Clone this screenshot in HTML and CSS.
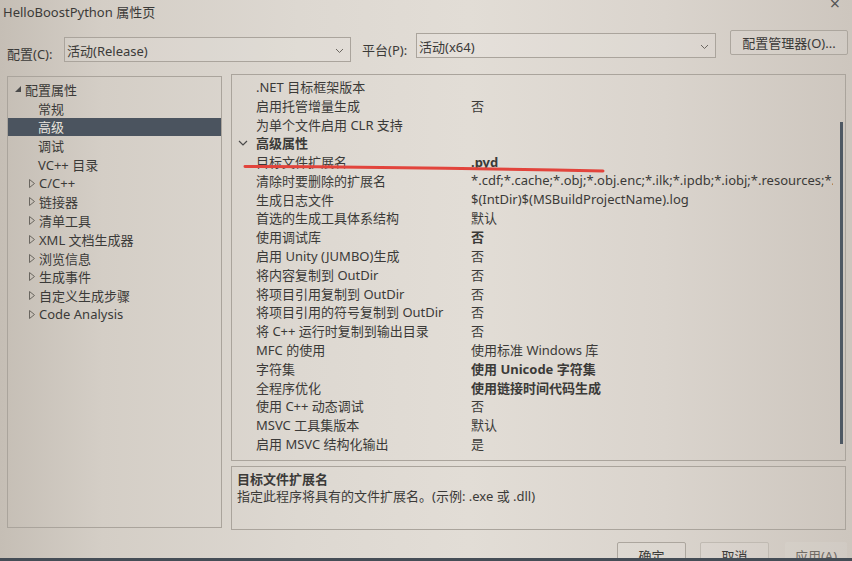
FILE: index.html
```html
<!DOCTYPE html>
<html lang="zh-CN">
<head>
    <meta charset="UTF-8">
    <meta name="viewport" content="width=device-width, initial-scale=1.0">
    <title>HelloBoostPython 属性页</title>
    <link rel="stylesheet" href="styles.css">
</head>
<body>
    <div class="dialog">
        <div class="titlebar">
            <span class="title">HelloBoostPython 属性页</span>
            <span class="close">×</span>
        </div>

        <div class="toolbar">
            <label class="field-label">配置(C):</label>
            <div class="combo combo-config">
                <span>活动(Release)</span>
                <svg class="chev" width="9" height="6" viewBox="0 0 9 6"><polyline points="1,1 4.5,4.5 8,1" fill="none" stroke="#6b6660" stroke-width="1"/></svg>
            </div>
            <label class="field-label label-platform">平台(P):</label>
            <div class="combo combo-platform">
                <span>活动(x64)</span>
                <svg class="chev" width="9" height="6" viewBox="0 0 9 6"><polyline points="1,1 4.5,4.5 8,1" fill="none" stroke="#6b6660" stroke-width="1"/></svg>
            </div>
            <button class="btn btn-manager">配置管理器(O)...</button>
        </div>

        <div class="main">
            <div class="tree">
                <div class="node root">
                    <svg class="arrow" width="6" height="6" viewBox="0 0 6 6"><polygon points="6,0 6,6 0,6" fill="#4a4a4a"/></svg>
                    配置属性
                </div>
                <div class="node leaf">常规</div>
                <div class="node leaf selected">高级</div>
                <div class="node leaf">调试</div>
                <div class="node leaf">VC++ 目录</div>
                <div class="node branch"><svg class="arrow" width="6" height="9" viewBox="0 0 6 9"><polygon points="0.5,0.5 5.5,4.5 0.5,8.5" fill="none" stroke="#6a6660"/></svg>C/C++</div>
                <div class="node branch"><svg class="arrow" width="6" height="9" viewBox="0 0 6 9"><polygon points="0.5,0.5 5.5,4.5 0.5,8.5" fill="none" stroke="#6a6660"/></svg>链接器</div>
                <div class="node branch"><svg class="arrow" width="6" height="9" viewBox="0 0 6 9"><polygon points="0.5,0.5 5.5,4.5 0.5,8.5" fill="none" stroke="#6a6660"/></svg>清单工具</div>
                <div class="node branch"><svg class="arrow" width="6" height="9" viewBox="0 0 6 9"><polygon points="0.5,0.5 5.5,4.5 0.5,8.5" fill="none" stroke="#6a6660"/></svg>XML 文档生成器</div>
                <div class="node branch"><svg class="arrow" width="6" height="9" viewBox="0 0 6 9"><polygon points="0.5,0.5 5.5,4.5 0.5,8.5" fill="none" stroke="#6a6660"/></svg>浏览信息</div>
                <div class="node branch"><svg class="arrow" width="6" height="9" viewBox="0 0 6 9"><polygon points="0.5,0.5 5.5,4.5 0.5,8.5" fill="none" stroke="#6a6660"/></svg>生成事件</div>
                <div class="node branch"><svg class="arrow" width="6" height="9" viewBox="0 0 6 9"><polygon points="0.5,0.5 5.5,4.5 0.5,8.5" fill="none" stroke="#6a6660"/></svg>自定义生成步骤</div>
                <div class="node branch"><svg class="arrow" width="6" height="9" viewBox="0 0 6 9"><polygon points="0.5,0.5 5.5,4.5 0.5,8.5" fill="none" stroke="#6a6660"/></svg>Code Analysis</div>
            </div>

            <div class="right">
                <div class="grid">
                    <div class="rows">
                        <div class="row"><span class="name">.NET 目标框架版本</span><span class="value"></span></div>
                        <div class="row"><span class="name">启用托管增量生成</span><span class="value">否</span></div>
                        <div class="row"><span class="name">为单个文件启用 CLR 支持</span><span class="value"></span></div>
                        <div class="row header">
                            <svg class="hchev" width="10" height="6" viewBox="0 0 10 6"><polyline points="1,1 5,5 9,1" fill="none" stroke="#4a4a4a" stroke-width="1.2"/></svg>
                            <span class="name">高级属性</span>
                        </div>
                        <div class="row"><span class="name">目标文件扩展名</span><span class="value bold">.pyd</span></div>
                        <div class="row"><span class="name">清除时要删除的扩展名</span><span class="value">*.cdf;*.cache;*.obj;*.obj.enc;*.ilk;*.ipdb;*.iobj;*.resources;*.tlb;*.tli;*.tlh;*.tmp;*.rsp</span></div>
                        <div class="row"><span class="name">生成日志文件</span><span class="value">$(IntDir)$(MSBuildProjectName).log</span></div>
                        <div class="row"><span class="name">首选的生成工具体系结构</span><span class="value">默认</span></div>
                        <div class="row"><span class="name">使用调试库</span><span class="value bold">否</span></div>
                        <div class="row"><span class="name">启用 Unity (JUMBO)生成</span><span class="value">否</span></div>
                        <div class="row"><span class="name">将内容复制到 OutDir</span><span class="value">否</span></div>
                        <div class="row"><span class="name">将项目引用复制到 OutDir</span><span class="value">否</span></div>
                        <div class="row"><span class="name">将项目引用的符号复制到 OutDir</span><span class="value">否</span></div>
                        <div class="row"><span class="name">将 C++ 运行时复制到输出目录</span><span class="value">否</span></div>
                        <div class="row"><span class="name">MFC 的使用</span><span class="value">使用标准 Windows 库</span></div>
                        <div class="row"><span class="name">字符集</span><span class="value bold">使用 Unicode 字符集</span></div>
                        <div class="row"><span class="name">全程序优化</span><span class="value bold">使用链接时间代码生成</span></div>
                        <div class="row"><span class="name">使用 C++ 动态调试</span><span class="value">否</span></div>
                        <div class="row"><span class="name">MSVC 工具集版本</span><span class="value">默认</span></div>
                        <div class="row"><span class="name">启用 MSVC 结构化输出</span><span class="value">是</span></div>
                    </div>
                    <div class="scrollbar"><div class="thumb"></div></div>
                </div>
                <div class="desc">
                    <div class="desc-title">目标文件扩展名</div>
                    <div class="desc-text">指定此程序将具有的文件扩展名。(示例: .exe 或 .dll)</div>
                </div>
            </div>
        </div>

        <div class="footer">
            <button class="btn btn-ok">确定</button>
            <button class="btn btn-cancel">取消</button>
            <button class="btn btn-apply">应用(A)</button>
        </div>

        <!-- hand-drawn red underline from the screenshot -->
        <svg class="markup" width="852" height="561" viewBox="0 0 852 561">
            <path d="M245 166.5 Q 420 167 603 171" fill="none" stroke="#e2443c" stroke-width="3" stroke-linecap="round"/>
        </svg>
    </div>
</body>
</html>
```

FILE: styles.css
```css
body {
    margin: 0;
    background-color: #454d56;
    font-family: "Noto Sans", "Noto Sans CJK SC", sans-serif;
    font-size: 13px;
    color: #3b3a38;
}
.dialog {
    position: relative;
    width: 852px;
    height: 558px;
    overflow: hidden;
    background: linear-gradient(90deg, #c5beb5 0%, #d4cec6 12%, #ddd8d1 35%, #e2ddd6 55%, #dad4cd 78%, #cdc6be 100%);
}
.titlebar {
    display: flex;
    justify-content: space-between;
    height: 24px;
    padding: 0 12px 0 3px;
    line-height: 24px;
}
.close {
    font-size: 18px;
    line-height: 6px;
    color: #555;
}
.toolbar {
    display: flex;
    align-items: flex-start;
    height: 50px;
    padding: 6px 0 0 7px;
    box-sizing: border-box;
}
.field-label {
    width: 57px;
    margin-top: 15px;
    line-height: 18px;
}
.label-platform {
    width: 54px;
    margin-top: 11px;
}
.combo {
    display: flex;
    align-items: center;
    justify-content: space-between;
    height: 25px;
    padding: 2px 6px 0 2px;
    border: 1px solid #aaa49c;
    background-color: rgba(255, 255, 255, 0.1);
    box-sizing: border-box;
}
.combo-config {
    width: 287px;
    margin-top: 7px;
    margin-right: 11px;
}
.combo-platform {
    width: 300px;
    margin-top: 3px;
    margin-right: 14px;
}
.btn {
    font-family: "Noto Sans", "Noto Sans CJK SC", sans-serif;
    font-size: 13px;
    color: #3b3a38;
    background-color: rgba(255, 255, 255, 0.08);
    border: 1px solid #aca69e;
    border-radius: 2px;
    padding: 0;
}
.btn-manager {
    width: 118px;
    height: 25px;
    margin-top: 0;
}
.main {
    display: flex;
    gap: 9px;
    padding-left: 7px;
    height: 456px;
}
.tree {
    width: 215px;
    margin-top: 2px;
    height: 452px;
    border: 1px solid #aaa49c;
    box-sizing: border-box;
    padding-top: 3px;
}
.node {
    display: flex;
    align-items: center;
    height: 18.75px;
    padding-left: 30px;
    white-space: nowrap;
}
.node .arrow {
    margin-right: 3px;
}
.root {
    padding-left: 7px;
}
.root .arrow {
    margin-right: 4px;
}
.leaf {
    padding-left: 30px;
}
.branch {
    padding-left: 21px;
}
.branch .arrow {
    margin-right: 4px;
}
.selected {
    background-color: #4b545f;
    color: #e8e4de;
}
.right {
    display: flex;
    flex-direction: column;
    gap: 5px;
    width: 615px;
}
.grid {
    display: flex;
    height: 389px;
    border: 1px solid #aaa49c;
    box-sizing: border-box;
}
.rows {
    flex: 1;
    min-width: 0;
    padding: 2px 7px 0 0;
}
.row {
    display: flex;
    align-items: center;
    height: 18.8px;
    padding-left: 24px;
    white-space: nowrap;
}
.row .name {
    width: 215px;
    flex-shrink: 0;
}
.row .value {
    flex: 1;
    overflow: hidden;
}
.bold,
.header .name {
    font-weight: bold;
}
.header {
    padding-left: 6px;
}
.hchev {
    margin-right: 8px;
}
.scrollbar {
    width: 5px;
    padding-top: 47px;
}
.thumb {
    width: 3px;
    height: 322px;
    background-color: #4e5863;
}
.desc {
    height: 64px;
    border: 1px solid #aaa49c;
    box-sizing: border-box;
    padding: 4px 5px;
    line-height: 17px;
}
.desc-title {
    font-weight: bold;
}
.footer {
    display: flex;
    justify-content: flex-end;
    padding: 12px 5px 0 0;
}
.footer .btn {
    height: 26px;
    width: 69px;
}
.btn-cancel {
    margin-left: 14px;
    border-color: #c0bab2;
}
.btn-apply {
    margin-left: 16px;
    border-color: transparent;
}
.footer .btn-apply {
    width: 62px;
    color: #6f6a64;
}
.markup {
    position: absolute;
    left: 0;
    top: 0;
    pointer-events: none;
}
```
